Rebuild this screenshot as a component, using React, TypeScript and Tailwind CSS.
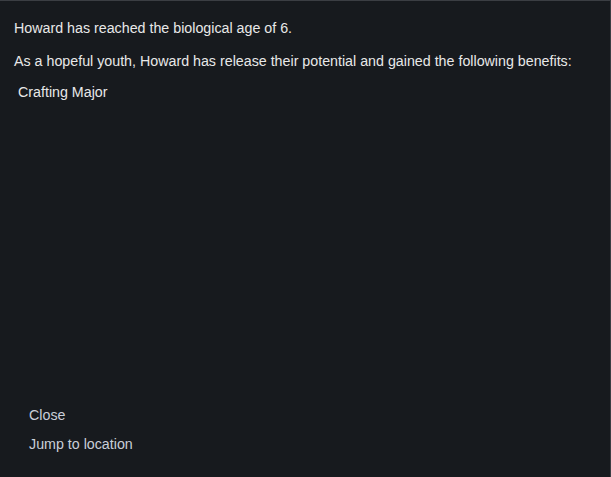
import React from 'react';

const App: React.FC = () => {
  return (
    <div className="h-[477px] w-[611px] overflow-hidden border-t border-r border-[#3b3e43] bg-[#171a1e] font-['Liberation_Sans',Arial,sans-serif] text-[14.25px] text-[#e8e8e8] flex flex-col">
      <div className="px-[14px] pt-[19px]">
        <p className="leading-[17px]">Howard has reached the biological age of 6.</p>
        <p className="mt-[16px] leading-[17px]">
          As a hopeful youth, Howard has release their potential and gained the following benefits:
        </p>
        <ul className="mt-[14px] pl-[4px]">
          <li className="leading-[17px]">Crafting Major</li>
        </ul>
      </div>
      <div className="mt-auto flex flex-col items-start gap-[12px] px-[29px] pb-[24px] text-[#c9ced8]">
        <button className="leading-[17px]">Close</button>
        <button className="leading-[17px]">Jump to location</button>
      </div>
    </div>
  );
};

export default App;
